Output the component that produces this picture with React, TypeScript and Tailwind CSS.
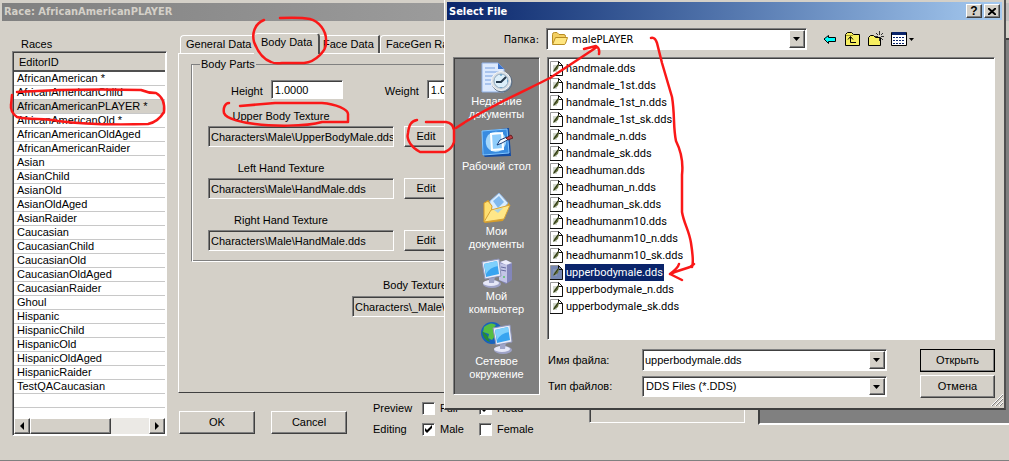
import type { ReactNode } from "react";
import clsx from "clsx";

const raised =
  "border border-t-white border-l-white border-r-[#404040] border-b-[#404040] bg-[#d4d0c8] shadow-[inset_-1px_-1px_0_#808080]";
const sunken =
  "border border-t-[#808080] border-l-[#808080] border-r-white border-b-white shadow-[inset_1px_1px_0_#404040]";
const tahoma = "font-['DejaVu_Sans_Condensed','DejaVu_Sans',sans-serif]";

const races = [
  "AfricanAmerican *",
  "AfricanAmericanChild",
  "AfricanAmericanPLAYER *",
  "AfricanAmericanOld *",
  "AfricanAmericanOldAged",
  "AfricanAmericanRaider",
  "Asian",
  "AsianChild",
  "AsianOld",
  "AsianOldAged",
  "AsianRaider",
  "Caucasian",
  "CaucasianChild",
  "CaucasianOld",
  "CaucasianOldAged",
  "CaucasianRaider",
  "Ghoul",
  "Hispanic",
  "HispanicChild",
  "HispanicOld",
  "HispanicOldAged",
  "HispanicRaider",
  "TestQACaucasian",
  "",
];

const files = [
  "handmale.dds",
  "handmale_1st.dds",
  "handmale_1st_n.dds",
  "handmale_1st_sk.dds",
  "handmale_n.dds",
  "handmale_sk.dds",
  "headhuman.dds",
  "headhuman_n.dds",
  "headhuman_sk.dds",
  "headhumanm10.dds",
  "headhumanm10_n.dds",
  "headhumanm10_sk.dds",
  "upperbodymale.dds",
  "upperbodymale_n.dds",
  "upperbodymale_sk.dds",
];

const Arrow = ({ dir }: { dir: "left" | "right" | "down" }) => (
  <svg width="8" height="8" viewBox="0 0 8 8" aria-hidden="true">
    {dir === "left" && <path d="M6 0v8L2 4z" />}
    {dir === "right" && <path d="M2 0v8l4-4z" />}
    {dir === "down" && <path d="M0 2h7L3.500 6z" />}
  </svg>
);

const PushButton = ({
  children,
  className,
}: {
  children: ReactNode;
  className?: string;
}) => (
  <button
    type="button"
    className={clsx("flex items-center justify-center", raised, className)}
  >
    {children}
  </button>
);

/* ---------- Race window ---------- */

const RaceList = () => (
  <div className="w-[155px] shrink-0 pt-[17px]">
    <div className="pl-[9px] leading-[13px]">Races</div>
    <div className={clsx("bg-white p-px", sunken)}>
      <table className="w-full border-collapse text-left">
        <thead>
          <tr className="h-[18px] border-b-2 border-[#505050] bg-[#d4d0c8]">
            <th className="py-0 pl-[5px] font-normal leading-4">EditorID</th>
          </tr>
        </thead>
        <tbody>
          {races.map((race, i) => (
            <tr
              key={i}
              className={clsx(
                "h-[14px] border-b border-[#c8c8c8]",
                i === 2 && "bg-[#d4d0c8]",
              )}
            >
              <td className="py-0 pl-[3px] leading-[13px]">{race}</td>
            </tr>
          ))}
        </tbody>
      </table>
      <div className="h-[10px]" />
      <div className="flex h-4 bg-[#ebe9e5]">
        <PushButton className="w-4">
          <Arrow dir="left" />
        </PushButton>
        <div className={clsx("w-[81px]", raised)} />
        <div className="flex-1" />
        <PushButton className="w-4">
          <Arrow dir="right" />
        </PushButton>
      </div>
    </div>
  </div>
);

const TabStrip = () => (
  <div role="tablist" className="flex h-5 items-end pl-0.5">
    <button
      role="tab"
      className="h-[18px] w-[74px] rounded-tl-sm border-t border-l border-white text-left pl-[5px]"
    >
      General Data
    </button>
    <button
      role="tab"
      aria-selected="true"
      className="relative -mb-px h-[21px] w-[66px] rounded-t-sm border-t border-r-2 border-t-white border-r-[#505050] bg-[#d4d0c8] pb-[3px] pl-[7px] text-left"
    >
      Body Data
    </button>
    <button
      role="tab"
      className="h-[18px] w-[60px] border-t border-r-2 border-t-white border-r-[#505050] pl-[3px] text-left"
    >
      Face Data
    </button>
    <button
      role="tab"
      className="h-[18px] w-[90px] rounded-tl-sm border-t border-l border-white pl-[5px] text-left"
    >
      FaceGen Race
    </button>
  </div>
);

const NumberField = ({ label, id }: { label: string; id: string }) => (
  <div className="flex items-center gap-2">
    <label htmlFor={id} className="pt-[3px]">
      {label}
    </label>
    <input
      id={id}
      defaultValue="1.0000"
      className={clsx("h-[19px] w-[72px] bg-white pl-[3px]", sunken)}
    />
  </div>
);

const TextureField = ({ label, value }: { label: string; value: string }) => (
  <div className="mb-[13px] last:mb-0">
    <label
      htmlFor={label}
      className="mb-0.5 block w-[146px] text-center leading-4"
    >
      {label}
    </label>
    <div className="flex gap-[10px]">
      <input
        id={label}
        readOnly
        defaultValue={value}
        className={clsx("h-[21px] w-[186px] pl-[2px]", sunken)}
      />
      <PushButton className="h-[21px] w-[44px]">Edit</PushButton>
    </div>
  </div>
);

const BodyPanel = () => (
  <div
    role="tabpanel"
    className="border border-t-white border-l-white border-r-[#404040] border-b-[#404040] px-3 pt-1 pb-[75px]"
  >
    <fieldset className="border border-t-[#808080] border-r-white border-b-white border-l-[#808080] pb-[10px] pl-4 shadow-[inset_1px_0_0_#fff,inset_0_-1px_0_#808080]">
      <legend className="-ml-2 px-px leading-[13px]">Body Parts</legend>
      <div className="mb-[9px] flex gap-[42px] pt-[9px] pl-[23px]">
        <NumberField id="height" label="Height" />
        <NumberField id="weight" label="Weight" />
      </div>
      <TextureField
        label="Upper Body Texture"
        value="Characters\Male\UpperBodyMale.dds"
      />
      <TextureField
        label="Left Hand Texture"
        value="Characters\Male\HandMale.dds"
      />
      <TextureField
        label="Right Hand Texture"
        value="Characters\Male\HandMale.dds"
      />
    </fieldset>
    <div className="ml-[161px] pt-[15px]">
      <label
        htmlFor="body-texture"
        className="mb-[3px] block pl-[31px] leading-4"
      >
        Body Texture
      </label>
      <input
        id="body-texture"
        readOnly
        defaultValue="Characters\_Male\"
        className={clsx("block h-[21px] w-[186px] pl-[2px]", sunken)}
      />
    </div>
  </div>
);

const Check = ({ label, checked }: { label: string; checked?: boolean }) => (
  <label className="flex w-[57px] items-center gap-[5px]">
    <span className="relative flex">
      <input
        type="checkbox"
        defaultChecked={checked}
        className={clsx("size-[13px] appearance-none bg-white", sunken)}
      />
      {checked && (
        <svg
          className="pointer-events-none absolute inset-0"
          width="13"
          height="13"
          viewBox="0 0 13 13"
        >
          <path d="M3 5v3l2 2 5-5V2L5 7z" />
        </svg>
      )}
    </span>
    {label}
  </label>
);

const RaceWindow = () => (
  <section className="pt-[3px]">
    <h1
      className={clsx(
        "ml-0.5 h-[18px] bg-linear-to-r from-[#808080] to-[#c0c0c0] pl-[2px] font-bold leading-[18px] text-[#d4d0c8]",
        tahoma,
      )}
    >
      Race: AfricanAmericanPLAYER
    </h1>
    <div className="flex pl-3">
      <RaceList />
      <div className="ml-[11px] w-[567px] shrink-0 pt-3">
        <TabStrip />
        <BodyPanel />
        <div className="flex items-start">
          <PushButton className="mt-[18px] ml-px h-[23px] w-[76px]">
            OK
          </PushButton>
          <PushButton className="mt-[18px] ml-4 h-[23px] w-[76px]">
            Cancel
          </PushButton>
          <div className="mt-[7px] ml-[26px] flex flex-col gap-1">
            <div className="flex h-[17px] items-center">
              <span className="w-[49px]">Preview</span>
              <Check label="Full" />
              <Check label="Head" checked />
            </div>
            <div className="flex h-[17px] items-center">
              <span className="w-[49px]">Editing</span>
              <Check label="Male" checked />
              <Check label="Female" />
            </div>
          </div>
          <div className={clsx("ml-auto h-[30px] w-[156px]", sunken)} />
        </div>
      </div>
      <div
        className={clsx(
          "mt-[17px] mb-[13px] ml-[13px] min-w-0 flex-1 bg-[#808080]",
          "border-t-2 border-b-2 border-l-2 border-t-[#404040] border-b-white border-l-[#404040]",
        )}
      />
    </div>
  </section>
);

/* ---------- Select File dialog ---------- */

const FolderIcon = () => (
  <svg width="18" height="16" viewBox="0 0 18 16" aria-hidden="true">
    <path
      d="M1.500 12.500V3.500Q1.500 1.500 3.500 1.500H6L8 3.500H13Q14.500 3.500 14.500 5.500V12Z"
      fill="#f3cf62"
      stroke="#b98d24"
    />
    <path
      d="M1.500 13.500L4.500 6.500H16.500L14.500 12.500Q14 13.500 13 13.500Z"
      fill="#ffe680"
      stroke="#b98d24"
    />
  </svg>
);

const FileIcon = ({ selected }: { selected?: boolean }) => (
  <svg width="15" height="17" viewBox="0 0 15 17" aria-hidden="true">
    <path
      d="M1.500 15.500V1.500H9.500L13.500 5.500V15.500Z"
      fill={selected ? "#7788b2" : "#fff"}
      stroke="#999"
    />
    <path d="M9.500 1.500V5.500H13.500V15.500H1" fill="none" stroke="#111" />
    <path d="M9.500 1.500L13.500 5.500" stroke="#111" />
    <path d="M4 5H8V12H4Z" fill={selected ? "#8696b8" : "#d5dad2"} />
    <path d="M4 12L5 9L9 4L10 5L9 9L6 11Z" fill="#66733b" />
    <path d="M5 11L9 5" stroke="#273018" fill="none" />
  </svg>
);

const Monitor = () => (
  <>
    <ellipse cx="11" cy="27" rx="9" ry="4" fill="#9ea3c8" />
    <ellipse cx="10" cy="26" rx="8" ry="3" fill="#e6e8f8" />
    <path d="M8 18L14 19L13 26H8Z" fill="#9fa5c8" />
    <path d="M1 5L18 2L20 19L4 22Z" fill="#e8ecf8" stroke="#8d93b8" />
    <path d="M3 7L16 4L18 17L5 20Z" fill="#38a4f0" />
    <path d="M3 7L16 4L17 9Q9 10 5 17Z" fill="#7fd0fc" />
  </>
);

const RecentIcon = () => (
  <svg width="32" height="32" viewBox="0 0 32 32" aria-hidden="true">
    <path d="M1 1H17L23 7V30H1Z" fill="#dce9fd" stroke="#8fb0e6" />
    <path d="M17 1V7H23Z" fill="#3c72c9" />
    <path
      d="M4 6H14M4 10H18M4 14H16M4 18H11M4 22H10"
      stroke="#a9c4ee"
      strokeWidth="2"
    />
    <circle cx="21" cy="20" r="10" fill="#8ba3ba" stroke="#5b6b80" />
    <circle cx="20" cy="19" r="9.500" fill="#d8dde2" stroke="#f7f7f7" />
    <circle cx="20" cy="19" r="7" fill="#ddeffa" stroke="#8fa9c0" />
    <path d="M25 15L20 20H15" fill="none" stroke="#26394c" strokeWidth="2" />
    <path d="M20 12v2M20 25v1M26 19h1" stroke="#3b88bb" />
  </svg>
);

const DesktopIcon = () => (
  <svg width="32" height="32" viewBox="0 0 32 32" aria-hidden="true">
    <path d="M2 4L28 1L30 29L4 30L1 27Z" fill="#134ca4" />
    <path d="M1 4L26 2L28 26L2 28Z" fill="#388be0" stroke="#81c6ff" />
    <path
      d="M7 8Q14 2 22 7Q29 14 21 23Q12 28 6 20Q3 14 7 8Z"
      fill="#a5d8fc"
    />
    <path
      d="M10 7L21 6L22 22L11 23Z"
      fill="#8fcdfb"
      stroke="#fff"
      strokeWidth="2"
    />
    <path d="M16 18L19 13L26 10L28 12L21 16Z" fill="#f5f9ff" stroke="#1a3d79" />
    <path d="M25 11L30 8L32 11L27 13Z" fill="#bd3e42" stroke="#672124" />
  </svg>
);

const DocumentsIcon = () => (
  <svg width="32" height="32" viewBox="0 0 32 32" aria-hidden="true">
    <path d="M3 11L7 8L11 11L27 10L29 13L22 29L4 31Z" fill="#d79d28" />
    <path d="M9 9L18 1L27 11L18 23L8 18Z" fill="#d8ecff" stroke="#91b5df" />
    <path d="M12 9L18 4L23 10L17 16Z" fill="#80b9ee" />
    <path d="M3 11L7 9L11 14L9 29L3 30Z" fill="#ffdf70" stroke="#d69b28" />
    <path d="M3 30L10 18L29 13L23 27Z" fill="#ffe788" stroke="#d7a235" />
    <path d="M13 18L17 21L22 16Z" fill="#a9d3e4" />
  </svg>
);

const ComputerIcon = () => (
  <svg width="32" height="32" viewBox="0 0 32 32" aria-hidden="true">
    <path d="M19 5L25 3L31 6V23L25 27L18 23Z" fill="#8386ba" />
    <path d="M19 5L25 3L31 6L25 8Z" fill="#eeeefb" />
    <path d="M18 6L26 8V26L18 23Z" fill="#c3c5e6" />
    <path d="M20 10L25 11M20 13L25 14" stroke="#666b9e" />
    <circle cx="23" cy="20" r="1" fill="#56c66b" />
    <Monitor />
  </svg>
);

const NetworkIcon = () => (
  <svg width="32" height="32" viewBox="0 0 32 32" aria-hidden="true">
    <circle cx="11" cy="11" r="11" fill="#1762bd" />
    <path d="M3 5Q10-1 15 3L12 7L16 11L11 18L7 16L8 12L2 10Z" fill="#55bd43" />
    <path d="M1 9L6 13L9 20Q2 18 1 9Z" fill="#278b35" />
    <g transform="translate(11 1)">
      <Monitor />
    </g>
  </svg>
);

const places = [
  { lines: ["Недавние", "документы"], icon: <RecentIcon /> },
  { lines: ["Рабочий стол"], icon: <DesktopIcon /> },
  { lines: ["Мои", "документы"], icon: <DocumentsIcon /> },
  { lines: ["Мой", "компьютер"], icon: <ComputerIcon /> },
  { lines: ["Сетевое", "окружение"], icon: <NetworkIcon /> },
];

const PlacesBar = () => (
  <nav
    className={clsx(
      "mb-[3px] flex w-[87px] shrink-0 flex-col bg-[#808080] pt-0.5 text-white",
      sunken,
    )}
  >
    {places.map(({ lines, icon }) => (
      <button
        key={lines.join(" ")}
        type="button"
        className="flex h-[65px] flex-col items-center pt-0.5"
      >
        {icon}
        <span className="pt-px leading-[13px]">
          {lines.map((line) => (
            <span key={line} className="block whitespace-nowrap">
              {line}
            </span>
          ))}
        </span>
      </button>
    ))}
  </nav>
);

const FileList = () => (
  <ul
    className={clsx(
      "min-w-0 flex-1 self-start bg-white pt-0.5 pb-[24px] pl-px font-[Roboto,sans-serif]",
      sunken,
    )}
  >
    {files.map((file) => {
      const selected = file === "upperbodymale.dds";
      return (
        <li key={file} className="flex h-[17px] items-center gap-px">
          <FileIcon selected={selected} />
          <span
            className={clsx(
              "px-px leading-[17px]",
              selected && "bg-[#0a246a] text-white",
            )}
          >
            {file}
          </span>
        </li>
      );
    })}
  </ul>
);

const DropArrow = () => (
  <span
    className={clsx(
      "pointer-events-none absolute top-0.5 right-0.5 bottom-0.5 flex w-4 items-center justify-center",
      raised,
    )}
  >
    <Arrow dir="down" />
  </span>
);

const ToolbarIcons = () => (
  <div className="ml-[15px] flex items-center gap-[6px]">
    <button type="button" aria-label="Назад">
      <svg width="16" height="16" viewBox="0 0 16 16">
        <path
          d="M2 8L6.500 4.500V6.500H13.500V10.500H6.500V12.500Z"
          fill="#00ffff"
          stroke="#000"
        />
      </svg>
    </button>
    <button type="button" aria-label="Вверх">
      <svg width="17" height="16" viewBox="0 0 17 16">
        <path
          d="M1.500 14.500V3.500L3.500 1.500H7.500L9.500 3.500H15.500V14.500Z"
          fill="#f6ee60"
          stroke="#000"
        />
        <path d="M2 4.500H9" stroke="#a39b30" />
        <path
          d="M6.500 6V11.500H12M4 8.500L6.500 5.500L9 8.500"
          fill="none"
          stroke="#000"
        />
      </svg>
    </button>
    <button type="button" aria-label="Новая папка">
      <svg width="18" height="16" viewBox="0 0 18 16">
        <path
          d="M1.500 14.500V6.500L3.500 4.500H6.500L8.500 6.500H13.500V14.500Z"
          fill="#f6ee60"
          stroke="#000"
        />
        <path
          d="M12.500 0V4M12.500 7V10M8 5.500H11M14 5.500H17M9 2L11 4M16 2L14 4M16 9L14 7"
          stroke="#333"
        />
      </svg>
    </button>
    <button type="button" aria-label="Вид">
      <svg width="24" height="16" viewBox="0 0 24 16">
        <path d="M.5 1.500H15.500V14.500H.5Z" fill="#fff" stroke="#000" />
        <path d="M1 1H15V4H1Z" fill="#0a246a" />
        <path
          d="M2 6.500H14M2 9.500H14M2 12.500H14"
          stroke="#0a246a"
          strokeWidth="1"
          strokeDasharray="2 1"
        />
        <path d="M18 7H23L20.500 10Z" />
      </svg>
    </button>
  </div>
);

const FileDialog = () => (
  <section
    role="dialog"
    aria-labelledby="dialog-title"
    className="absolute top-0 right-[3px] left-[444px] border-r-2 border-b-2 border-l border-l-white border-r-[#505050] border-b-[#404040] bg-[#d4d0c8] px-0.5 pt-0.5"
  >
    <header className="flex h-[18px] items-center gap-0.5 bg-linear-to-r from-[#0a246a] to-[#a6caf0] pr-0.5 pl-[2px]">
      <h2
        id="dialog-title"
        className={clsx("flex-1 font-bold text-white", tahoma)}
      >
        Select File
      </h2>
      <PushButton className="h-[14px] w-4 text-xs font-bold">?</PushButton>
      <PushButton className="h-[14px] w-4">
        <svg width="8" height="7" viewBox="0 0 8 7" aria-label="Закрыть">
          <path d="M0 0L8 7M8 0L0 7" stroke="#000" strokeWidth="2" />
        </svg>
      </PushButton>
    </header>

    <div className="flex items-center pt-2 pb-[7px]">
      <label
        htmlFor="folder"
        className={clsx("w-[99px] pr-[7px] text-right", tahoma)}
      >
        Папка:
      </label>
      <div className="relative w-[261px]">
        <select
          id="folder"
          className={clsx(
            "block h-[22px] w-full appearance-none bg-white pl-[25px]",
            tahoma,
            sunken,
          )}
        >
          <option>malePLAYER</option>
        </select>
        <span className="pointer-events-none absolute top-[3px] left-[5px]">
          <FolderIcon />
        </span>
        <DropArrow />
      </div>
      <ToolbarIcons />
    </div>

    <div className="flex gap-[7px] pr-[7px] pb-[10px] pl-[6px]">
      <PlacesBar />
      <div className="min-w-0 flex-1">
        <div className="flex">
          <FileList />
        </div>
        <div className="mt-[9px] flex pl-px">
          <div className="flex flex-col gap-[5px]">
            <div className="flex items-center">
              <label htmlFor="file-name" className="w-[94px]">
                Имя файла:
              </label>
              <div className="relative w-[245px]">
                <input
                  id="file-name"
                  defaultValue="upperbodymale.dds"
                  className={clsx(
                    "block h-[22px] w-full bg-white pl-[2px]",
                    sunken,
                  )}
                />
                <DropArrow />
              </div>
            </div>
            <div className="flex items-center">
              <label htmlFor="file-type" className="w-[94px]">
                Тип файлов:
              </label>
              <div className="relative w-[245px]">
                <select
                  id="file-type"
                  className={clsx(
                    "block h-[21px] w-full appearance-none bg-white pl-[3px]",
                    sunken,
                  )}
                >
                  <option>DDS Files (*.DDS)</option>
                </select>
                <DropArrow />
              </div>
            </div>
          </div>
          <div className="ml-auto flex flex-col gap-[3px]">
            <PushButton className="h-[23px] w-[75px] outline outline-black -outline-offset-1">
              Открыть
            </PushButton>
            <PushButton className="h-[23px] w-[75px]">Отмена</PushButton>
          </div>
        </div>
      </div>
    </div>
    <svg
      className="absolute right-px bottom-0.5"
      width="12"
      height="12"
      viewBox="0 0 12 12"
      aria-hidden="true"
    >
      <path d="M1 12L12 1M5 12L12 5M9 12L12 9" stroke="#808080" />
      <path d="M0 12L12 0M4 12L12 4M8 12L12 8" stroke="#fff" />
    </svg>
  </section>
);

/* Red pen marks drawn over both windows */
const PenMarks = () => (
  <svg
    className="pointer-events-none absolute top-0 left-0"
    width="1009"
    height="461"
    viewBox="0 0 1009 461"
    fill="none"
    stroke="#fa1818"
    strokeWidth="2.5"
    strokeLinecap="round"
    strokeLinejoin="round"
    aria-hidden="true"
  >
    <path d="M264 20C254 24 252 34 254 42C257 50 262 59 271 62Q275 64 282 63H304C316 62 327 50 326 42C327 30 318 21 310 19Q300 17 280 18" />
    <path d="M17 92C50 90 100 89 141 90Q148 93 156 93C163 97 165 103 164 112Q158 122 148 124C110 125 80 124 58 121C45 118 29 120 17 117Q10 112 11 105L12 95" />
    <path d="M240 106L275 103H322C335 104 349 109 348 115L348 122L322 122C305 127 270 126 255 124C244 123 226 119 224 113C223 108 225 103 229 103" />
    <path d="M417 120C411 121 409 125 408 133C406 140 412 148 420 152H445Q452 149 454 142V130Q453 123 446 122H426" />
    <path d="M456 128C482 110 520 93 550 78L597 47M584 49L596 46Q600 48 599 54" />
    <path d="M651 38Q655 37 657 43L662 63L672 97C675 115 673 127 676 141Q684 157 682 175V212C684 224 689 230 691 243Q694 262 692 267M694 264L690 267C681 270 674 272 670 274M679 264Q678 268 670 274M670 274L682 280" />
  </svg>
);

export default function App() {
  return (
    <main className="relative min-h-screen overflow-hidden border-b border-[#808080] bg-[#d4d0c8] font-['Liberation_Sans',Arial,sans-serif] text-[11px] leading-[13px] text-black">
      <RaceWindow />
      <FileDialog />
      <PenMarks />
    </main>
  );
}
